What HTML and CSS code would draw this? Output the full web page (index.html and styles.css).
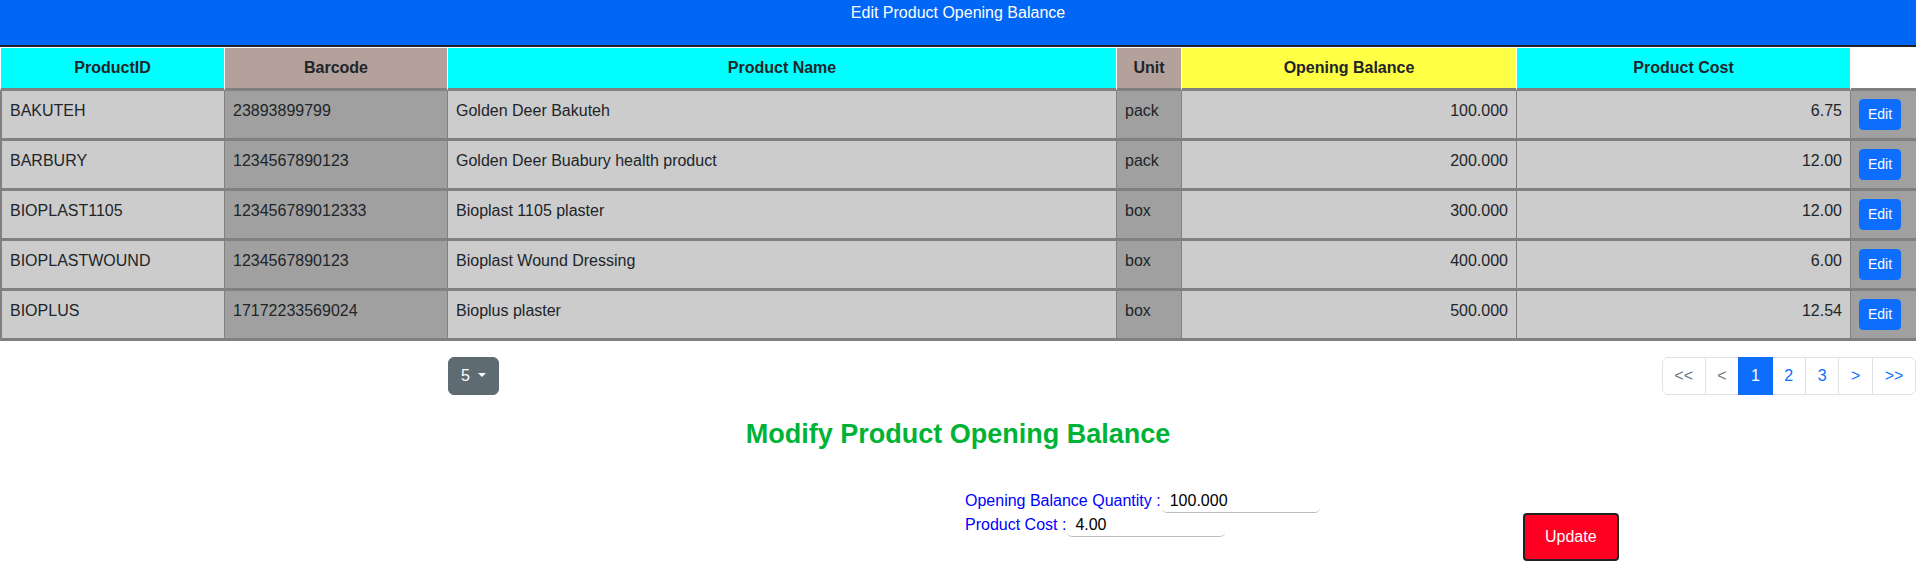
FILE: index.html
```html
<!DOCTYPE html>
<html>
<head>
<meta charset="utf-8">
<title>Edit Product Opening Balance</title>
<link rel="stylesheet" href="styles.css">
</head>
<body>
<div class="title-bar">Edit Product Opening Balance</div>
<table class="grid">
  <thead>
    <tr>
      <th class="c-id">ProductID</th>
      <th class="c-bar">Barcode</th>
      <th class="c-name">Product Name</th>
      <th class="c-unit">Unit</th>
      <th class="c-ob">Opening Balance</th>
      <th class="c-cost">Product Cost</th>
      <th class="c-act"></th>
    </tr>
  </thead>
  <tbody>
    <tr>
      <td class="c-id">BAKUTEH</td><td class="c-bar">23893899799</td><td class="c-name">Golden Deer Bakuteh</td><td class="c-unit">pack</td><td class="c-ob num">100.000</td><td class="c-cost num">6.75</td><td class="c-act"><button class="btn-edit">Edit</button></td>
    </tr>
    <tr>
      <td class="c-id">BARBURY</td><td class="c-bar">1234567890123</td><td class="c-name">Golden Deer Buabury health product</td><td class="c-unit">pack</td><td class="c-ob num">200.000</td><td class="c-cost num">12.00</td><td class="c-act"><button class="btn-edit">Edit</button></td>
    </tr>
    <tr>
      <td class="c-id">BIOPLAST1105</td><td class="c-bar">123456789012333</td><td class="c-name">Bioplast 1105 plaster</td><td class="c-unit">box</td><td class="c-ob num">300.000</td><td class="c-cost num">12.00</td><td class="c-act"><button class="btn-edit">Edit</button></td>
    </tr>
    <tr>
      <td class="c-id">BIOPLASTWOUND</td><td class="c-bar">1234567890123</td><td class="c-name">Bioplast Wound Dressing</td><td class="c-unit">box</td><td class="c-ob num">400.000</td><td class="c-cost num">6.00</td><td class="c-act"><button class="btn-edit">Edit</button></td>
    </tr>
    <tr>
      <td class="c-id">BIOPLUS</td><td class="c-bar">17172233569024</td><td class="c-name">Bioplus plaster</td><td class="c-unit">box</td><td class="c-ob num">500.000</td><td class="c-cost num">12.54</td><td class="c-act"><button class="btn-edit">Edit</button></td>
    </tr>
  </tbody>
</table>

<div class="table-footer">
  <button class="page-size">5 <span class="caret"></span></button>
  <ul class="pagination">
    <li class="page-link disabled">&lt;&lt;</li>
    <li class="page-link disabled">&lt;</li>
    <li class="page-link active">1</li>
    <li class="page-link">2</li>
    <li class="page-link">3</li>
    <li class="page-link">&gt;</li>
    <li class="page-link">&gt;&gt;</li>
  </ul>
</div>

<h2 class="modify-title">Modify Product Opening Balance</h2>

<div class="edit-form">
  <div class="fields">
    <div class="field">
      <label class="field-label">Opening Balance Quantity :</label>
      <input class="field-input" type="text" value="100.000">
    </div>
    <div class="field">
      <label class="field-label">Product Cost :</label>
      <input class="field-input" type="text" value="4.00">
    </div>
  </div>
  <button class="btn-update">Update</button>
</div>
</body>
</html>
```

FILE: styles.css
```css
* {
  box-sizing: border-box;
}

body {
  margin: 0;
  font-family: "Liberation Sans", Arial, Helvetica, sans-serif;
  font-size: 16px;
  color: #212529;
  background: #ffffff;
}

.title-bar {
  height: 47px;
  padding-top: 4px;
  background: #0066f5;
  color: #ffffff;
  text-align: center;
  border-bottom: 2px solid #222222;
}

/* ---------- table ---------- */
.grid {
  width: 1916px;
  table-layout: fixed;
  border-collapse: separate;
  border-spacing: 0;
}

.grid th {
  padding: 8px;
  line-height: 24px;
  font-weight: bold;
  text-align: center;
  border-top: 1px solid #ffffff;
  border-left: 1px solid #ffffff;
  border-bottom: 3px solid #808080;
}

.grid td {
  padding: 8px;
  line-height: 24px;
  vertical-align: top;
  background: #cccccc;
  border-left: 1px solid #808080;
  border-bottom: 3px solid #808080;
}

.grid td.c-id {
  border-left-width: 2px;
}

.grid th.c-id { width: 224px; background: #00ffff; }
.grid th.c-bar { width: 223px; background: #b5a19b; }
.grid th.c-name { width: 669px; background: #00ffff; }
.grid th.c-unit { width: 65px; background: #b5a19b; }
.grid th.c-ob { width: 335px; background: #ffff44; }
.grid th.c-cost { width: 334px; background: #00ffff; }
.grid th.c-act { width: 66px; background: #ffffff; }

.grid td.c-bar,
.grid td.c-unit,
.grid td.c-act {
  background: #a0a0a0;
}

.grid td.num {
  text-align: right;
}

.btn-edit {
  display: block;
  padding: 4px 8px;
  font-family: "Liberation Sans", Arial, sans-serif;
  font-size: 14px;
  line-height: 21px;
  color: #ffffff;
  background: #0d6efd;
  border: 1px solid #0d6efd;
  border-radius: 4px;
}

/* ---------- footer row ---------- */
.table-footer {
  display: flex;
  justify-content: space-between;
  align-items: center;
  margin-top: 16px;
  padding-left: 448px;
}

.page-size {
  padding: 6px 12px;
  font-family: "Liberation Sans", Arial, sans-serif;
  font-size: 16px;
  line-height: 24px;
  color: #ffffff;
  background: #5f6b73;
  border: 1px solid #5f6b73;
  border-radius: 6px;
}

.caret {
  display: inline-block;
  margin-left: 4px;
  vertical-align: 4px;
  border-top: 4px solid #ffffff;
  border-left: 4px solid transparent;
  border-right: 4px solid transparent;
}

.pagination {
  display: flex;
  margin: 0;
  padding: 0;
  list-style: none;
}

.page-link {
  position: relative;
  padding: 6px 11.7px;
  line-height: 24px;
  color: #0d6efd;
  background: #ffffff;
  border: 1px solid #dee2e6;
  margin-left: -1px;
}

.page-link:first-child {
  margin-left: 0;
  border-radius: 6px 0 0 6px;
}

.page-link:last-child {
  border-radius: 0 6px 6px 0;
}

.page-link.disabled {
  color: #6c757d;
}

.page-link.active {
  z-index: 1;
  color: #ffffff;
  background: #0d6efd;
  border-color: #0d6efd;
}

/* ---------- edit form ---------- */
.modify-title {
  margin: 24px 0 0;
  text-align: center;
  font-size: 27px;
  line-height: 31px;
  font-weight: bold;
  color: #00b336;
}

.edit-form {
  display: flex;
  align-items: flex-start;
  margin-top: 39px;
  padding-left: 965px;
}

.fields {
  width: 558px;
}

.field {
  display: flex;
  align-items: center;
  height: 24px;
}

.field-label {
  color: #0000ff;
  line-height: 24px;
}

.field-input {
  width: 158px;
  height: 24px;
  margin-left: 1px;
  padding: 0 8px;
  font-family: "Liberation Sans", Arial, sans-serif;
  font-size: 16px;
  color: #000000;
  background: #ffffff;
  border: none;
  border-bottom: 1px solid #bdbdbd;
  border-radius: 5px;
  outline: none;
}

.btn-update {
  margin-top: 24px;
  padding: 13px 20px;
  font-family: "Liberation Sans", Arial, sans-serif;
  font-size: 16px;
  line-height: 18px;
  color: #ffffff;
  background: #ff0022;
  border: 2px solid #222222;
  border-radius: 4px;
}
```
